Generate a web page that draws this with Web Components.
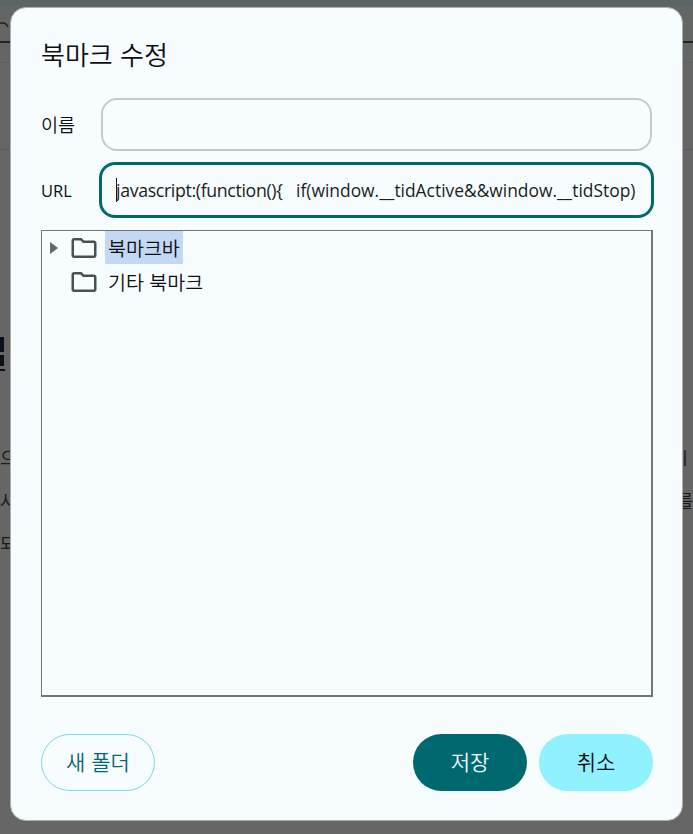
<!DOCTYPE html>
<html lang="ko"><head><meta charset="utf-8">
<style>
html,body{margin:0;height:100%;overflow:hidden;background:#666}
body{font-family:"Noto Sans CJK KR","Open Sans",sans-serif;font-weight:350}
</style></head><body>
<page-backdrop></page-backdrop>
<edit-dialog>
  <span slot="title">북마크 수정</span>
  <form-row label="이름"><text-box></text-box></form-row>
  <form-row label="URL" latin><text-box focused lead="javascript:(function(){" value="   if(window.__tidActive&amp;&amp;window.__tidStop)"></text-box></form-row>
  <folder-tree>
    <tree-item expandable selected>북마크바</tree-item>
    <tree-item>기타 북마크</tree-item>
  </folder-tree>
  <pill-button slot="left" kind="outline">새 폴더</pill-button>
  <pill-button slot="right" kind="primary">저장</pill-button>
  <pill-button slot="right" kind="secondary">취소</pill-button>
</edit-dialog>
<script>
const make=(name,html)=>{customElements.define(name,class extends HTMLElement{
  constructor(){super();this.attachShadow({mode:'open'}).innerHTML=typeof html==='function'?html(this):html;}
})};
make('page-backdrop',`<style>
:host{position:fixed;inset:0;display:block;background:#666;overflow:hidden;color:#1c1c1c;font:18px "Noto Sans CJK KR",sans-serif}
.strip{height:6px;background:#5c6566}
.top{height:35px;border-bottom:2px solid #222;background:#636665;position:relative}
.top svg{position:absolute;left:0;top:14px}
.mid{height:19px;border-bottom:1px solid #5c5f5f;background:#636665}
.sub{height:86px;border-bottom:1px solid #595c5c}
.head{margin-top:187px;height:44px;display:flex;flex-direction:column;gap:3px}
.head i{display:block;width:4px;background:#0d1118}
.head i:nth-child(1){height:15px}
.head i:nth-child(2){height:11px}
.head i:nth-child(3){height:2px;width:5px}
p{margin:0;line-height:43px;display:flex;justify-content:space-between}
.body{margin-top:55px}
</style><div class="strip"></div><div class="top"><svg width="10" height="12" viewBox="0 0 10 12"><path d="M0 3h3q3 0 5 4" fill="none" stroke="#222" stroke-width="1.5"/></svg></div><div class="mid"></div><div class="sub"></div><div class="head"><i></i><i></i><i></i></div>
<div class="body"><p><span>으</span><span>ㅣ</span></p><p><span>사</span><span>를</span></p><p><span>되</span></p></div>`);
make('edit-dialog',`<style>
:host{position:fixed;left:10px;top:7px;width:673px;height:814px;box-sizing:border-box;display:flex;flex-direction:column;background:#f7fcff;border:1px solid #a9b0b0;border-radius:16px;padding:26px 29px 29px 30px}
h2{margin:0 0 24px;font-weight:350;font-size:26px;line-height:40px;color:#0c0e10}
.main{flex:1;display:flex;flex-direction:column;gap:11px;min-height:0}
.actions{display:flex;justify-content:space-between;margin-top:37px}
.right{display:flex;gap:12px}
</style><h2><slot name="title"></slot></h2><div class="main"><slot></slot></div>
<div class="actions"><div><slot name="left"></slot></div><div class="right"><slot name="right"></slot></div></div>`);
make('form-row',el=>{const lat=el.hasAttribute('latin');return `<style>
:host{display:flex;align-items:center;color:#0c0e10}
.l{width:60px;flex:none;${lat?'font:400 16.5px "Open Sans",sans-serif;':'font-size:18.6px;padding-bottom:3px;'}}
.c{flex:1;min-width:0}
</style><div class="l">${el.getAttribute('label')}</div><div class="c"><slot></slot></div>`});
make('text-box',el=>{const f=el.hasAttribute('focused');const esc=s=>(s||'').replace(/&/g,'&amp;');return `<style>
:host{display:block;box-sizing:border-box;height:${f?56:53}px;border-radius:16px;border:${f?'3px solid #006970':'2px solid #c5c9ca'};margin:${f?'0 -1px 0 -2px':'0 1px 0 0'};padding:${f?'0 12px 0 14px':'0 14px'};overflow:hidden;background:#f7fcff}
.v{display:flex;align-items:center;height:100%;white-space:pre;overflow:hidden;font:400 17.4px "Open Sans",sans-serif;color:#1a1c1e}
.v span{flex:none}
.lead{font-size:17.75px;letter-spacing:-.35px}
.caret{flex:none;width:1px;height:24px;background:#1a1c1e;margin-right:-1px}
</style><div class="v">${f?'<span class="caret"></span>':''}<span class="lead">${esc(el.getAttribute('lead'))}</span><span>${esc(el.getAttribute('value'))}</span></div>`});
make('folder-tree',`<style>
:host{display:block;flex:1;min-height:0;margin-top:1px;box-sizing:border-box;border:1px solid #6f7779;border-width:1px 2px 2px 1px}
</style><slot></slot>`);
make('tree-item',el=>{const e=el.hasAttribute('expandable'),s=el.hasAttribute('selected');return `<style>
:host{display:flex;align-items:center;height:34px;font-size:19.5px;color:#0c0e10}
.ar{width:24px;flex:none;display:flex;justify-content:center}
svg{display:block}
.ic{flex:none;width:30px;height:30px;margin:0 6px 0 3px}
.t{padding:0 3px;height:33px;line-height:33px;margin-bottom:1px;${s?'background:#c1d9f5;':''}}
</style><span class="ar">${e?'<svg width="8" height="12" viewBox="0 0 8 12"><path d="M0 0 8 6 0 12z" fill="#5f6668"/></svg>':''}</span>
<svg class="ic" viewBox="0 0 24 24"><path fill="#4a4f52" d="M9.17 6l2 2H20v10H4V6h5.17M10 4H4c-1.1 0-1.99.9-1.99 2L2 18c0 1.1.9 2 2 2h16c1.1 0 2-.9 2-2V8c0-1.1-.9-2-2-2h-8l-2-2z"/></svg>
<span class="t"><slot></slot></span>`});
make('pill-button',el=>{const k=el.getAttribute('kind');const m={outline:'background:transparent;border:1.5px solid #7ad7e6;color:#006970;padding-bottom:4px;',primary:'background:#006970;color:#f2fbfd;padding-bottom:3px;',secondary:'background:#90f1ff;color:#0c0e10;padding-bottom:3px;'}[k];return `<style>
:host{display:inline-flex;align-items:center;justify-content:center;box-sizing:border-box;width:114px;height:57px;border-radius:29px;font-size:21px;${m}}
</style><slot></slot>`});
</script>
</body></html>
